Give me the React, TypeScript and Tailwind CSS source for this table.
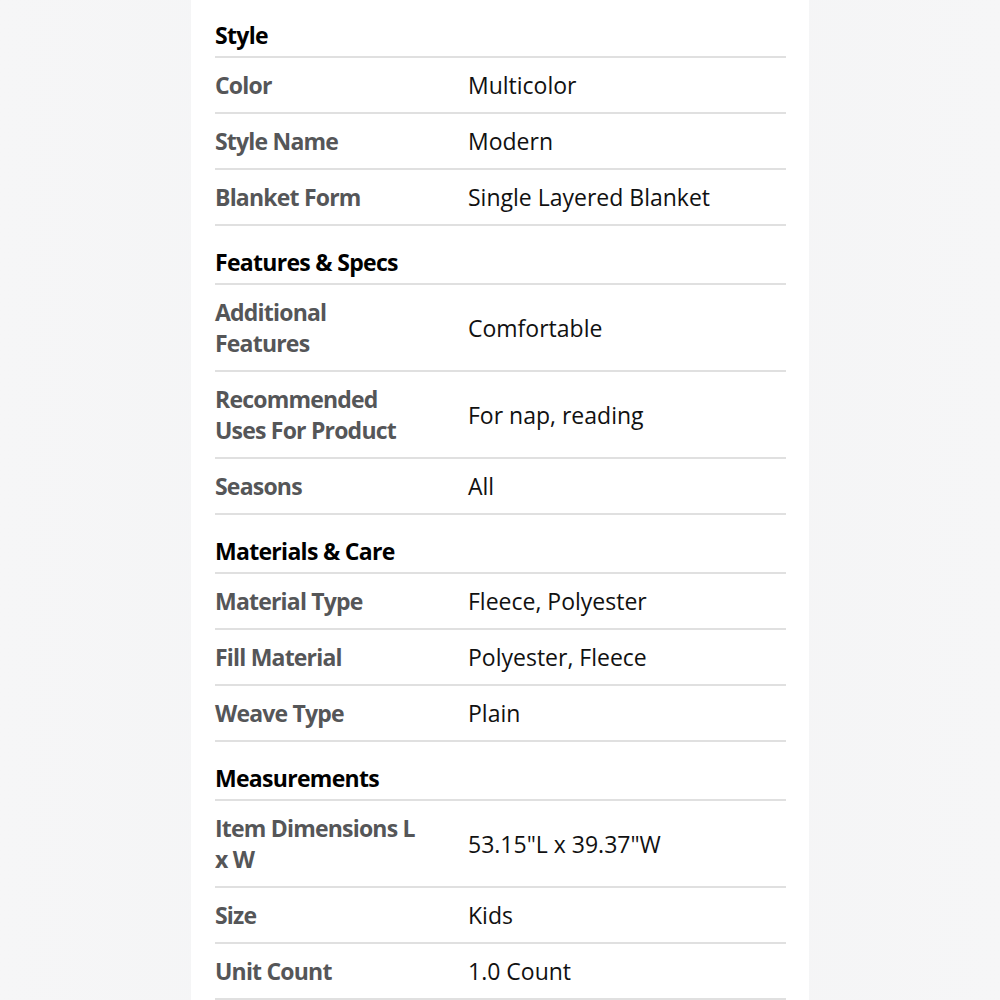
type Row = { label: string; value: string };
type Section = { title: string; rows: Row[] };

const sections: Section[] = [
  {
    title: "Style",
    rows: [
      { label: "Color", value: "Multicolor" },
      { label: "Style Name", value: "Modern" },
      { label: "Blanket Form", value: "Single Layered Blanket" },
    ],
  },
  {
    title: "Features & Specs",
    rows: [
      { label: "Additional Features", value: "Comfortable" },
      { label: "Recommended Uses For Product", value: "For nap, reading" },
      { label: "Seasons", value: "All" },
    ],
  },
  {
    title: "Materials & Care",
    rows: [
      { label: "Material Type", value: "Fleece, Polyester" },
      { label: "Fill Material", value: "Polyester, Fleece" },
      { label: "Weave Type", value: "Plain" },
    ],
  },
  {
    title: "Measurements",
    rows: [
      { label: "Item Dimensions L x W", value: "53.15\"L x 39.37\"W" },
      { label: "Size", value: "Kids" },
      { label: "Unit Count", value: "1.0 Count" },
    ],
  },
];

const SpecRow = ({ row }: { row: Row }) => (
  <div className="flex items-center border-b-2 border-[#e0e0e0] pt-3 pb-[11px]">
    <div className="w-[253px] shrink-0 pr-[45px] font-bold tracking-[-0.8px] text-[#555658]">
      {row.label}
    </div>
    <div className="flex-1 text-[#111111]">{row.value}</div>
  </div>
);

export default function App() {
  return (
    <div className="flex min-h-screen justify-center bg-gradient-to-r from-[#f6f6f7] via-[#f3f4f5] to-[#f6f6f7]">
      <div
        className="h-[1000px] w-[618px] overflow-hidden bg-white pl-6 pr-[23px] text-[23px] leading-[31px]"
        style={{ fontFamily: '"Open Sans", "Noto Sans", sans-serif' }}
      >
        {sections.map((section, i) => (
          <div key={section.title}>
            <div
              className={
                (i === 0 ? "pt-5 " : "pt-[21px] ") +
                "border-b-2 border-[#e0e0e0] pb-[5px] font-bold tracking-[-0.7px] text-black"
              }
            >
              {section.title}
            </div>
            {section.rows.map((row) => (
              <SpecRow key={row.label} row={row} />
            ))}
          </div>
        ))}
      </div>
    </div>
  );
}
